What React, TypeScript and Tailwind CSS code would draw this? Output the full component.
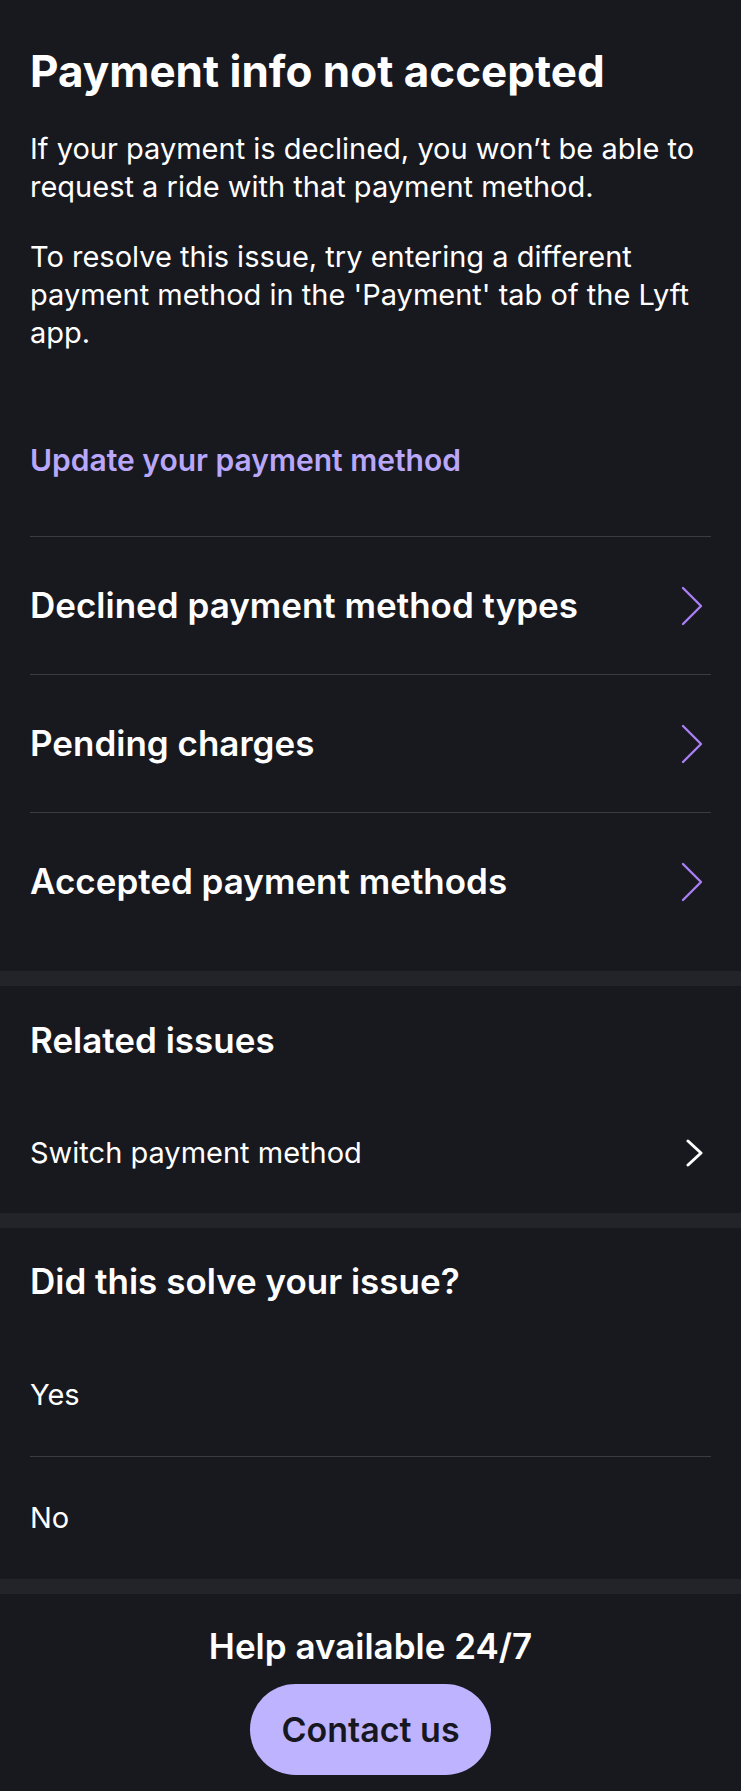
const font = { fontFamily: 'Inter, "Noto Sans", sans-serif' }

function Chevron({ purple }: { purple?: boolean }) {
  if (purple) {
    return (
      <svg width="22" height="40" viewBox="0 0 22 40" fill="none" className="shrink-0">
        <path d="M2 2 L20 20 L2 38" stroke="#a97ff4" strokeWidth="2.4" strokeLinecap="round" strokeLinejoin="round" />
      </svg>
    )
  }
  return (
    <svg width="17" height="28" viewBox="0 0 17 28" fill="none" className="shrink-0">
      <path d="M2 2 L15 14 L2 26" stroke="#ffffff" strokeWidth="3" strokeLinecap="round" strokeLinejoin="round" />
    </svg>
  )
}

const topics = ['Declined payment method types', 'Pending charges', 'Accepted payment methods']

export default function App() {
  return (
    <div className="min-h-screen w-full bg-[#18181f] text-white" style={font}>
      {/* article */}
      <div className="px-[30px] pt-[45px] pb-[21px]">
        <h1 className="text-[44px] leading-[52px] font-bold">Payment info not accepted</h1>
        <p className="mt-[33px] text-[29px] leading-[38px]">
          If your payment is declined, you won’t be able to request a ride with that payment method.
        </p>
        <p className="mt-[32px] text-[29px] leading-[38px]">
          To resolve this issue, try entering a different payment method in the 'Payment' tab of the Lyft app.
        </p>
        <a className="mt-[89px] block text-[30px] leading-[38px] font-semibold text-[#b9a7fb]">Update your payment method</a>
        <div className="mt-[57px]">
          {topics.map((t) => (
            <div key={t} className="flex h-[138px] items-center justify-between border-t border-[#3b3c42] pr-[8px]">
              <span className="pb-[2px] text-[35px] leading-[40px] font-semibold">{t}</span>
              <Chevron purple />
            </div>
          ))}
        </div>
      </div>

      <div className="h-[15px] bg-[#232429]" />

      {/* related */}
      <div className="px-[30px] pt-[34px] pb-[41px]">
        <h2 className="text-[35px] leading-[40px] font-semibold">Related issues</h2>
        <div className="mt-[74px] flex items-center justify-between pr-[8px]">
          <span className="text-[29px] leading-[38px]">Switch payment method</span>
          <Chevron />
        </div>
      </div>

      <div className="h-[15px] bg-[#232429]" />

      {/* feedback */}
      <div className="px-[30px] pt-[33px]">
        <h2 className="text-[35px] leading-[40px] font-semibold">Did this solve your issue?</h2>
        <div className="mt-[33px]">
          <div className="py-[42px] text-[29px] leading-[38px]">Yes</div>
          <div className="border-t border-[#3b3c42] py-[42px] text-[29px] leading-[38px]">No</div>
        </div>
      </div>

      <div className="h-[15px] bg-[#232429]" />

      {/* contact */}
      <div className="flex flex-col items-center pt-[32px] pb-[16px]">
        <p className="text-[35px] leading-[40px] font-semibold">Help available 24/7</p>
        <button className="mt-[18px] flex h-[91px] w-[241px] items-center justify-center rounded-full bg-[#bdb3ff] text-[34px] font-semibold text-[#17171f]">
          Contact us
        </button>
      </div>
    </div>
  )
}
